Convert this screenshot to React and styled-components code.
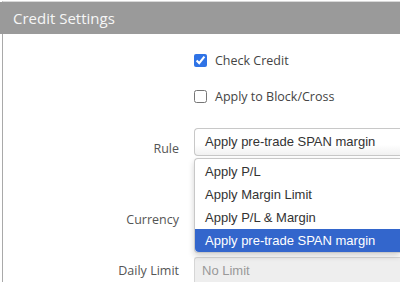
import styled, { createGlobalStyle } from 'styled-components'

const GlobalStyle = createGlobalStyle`
  html, body {
    margin: 0;
    padding: 0;
    background: #fff;
  }
  body {
    font-family: 'Open Sans', 'Liberation Sans', sans-serif;
    overflow: hidden;
  }
`

const Panel = styled.div`
  margin: 1px 0 0 2px;
  height: 281px;
  border-left: 1px solid #a9a9a9;
  border-top: 1px solid #d8d8d8;
  box-sizing: border-box;
`

const Header = styled.div`
  height: 32px;
  background: #9a9a9a;
  color: #f6f6f6;
  font-size: 15px;
  line-height: 32px;
  margin-left: -3px;
  padding-left: 13px;
`

const Body = styled.div`
  display: grid;
  grid-template-columns: 176px 1fr;
  column-gap: 15px;
  padding-top: 16px;
`

const Label = styled.div`
  text-align: right;
  font-size: 12.5px;
  color: #555;
  height: 28px;
  line-height: 28px;
  padding-top: ${p => p.offset || 0}px;
  box-sizing: border-box;
`

const Cell = styled.div`
  position: relative;
  height: ${p => p.h || 28}px;
  margin-bottom: ${p => p.gap || 0}px;
`

const Check = styled.label`
  display: flex;
  align-items: center;
  gap: 8px;
  height: 20px;
  font-size: 12.5px;
  color: #444;

  input {
    margin: 0;
    width: 13px;
    height: 13px;
    accent-color: #2f73e6;
  }
`

const SelectBox = styled.div`
  height: 28px;
  box-sizing: border-box;
  border: 1px solid #c8c8c8;
  border-right: none;
  border-radius: 4px 0 0 4px;
  background: linear-gradient(#fff 0%, #fff 60%, #f1f1f1 100%);
  font-family: 'Liberation Sans', Arial, sans-serif;
  font-size: 13px;
  color: #333;
  line-height: 26px;
  padding-left: 10px;
`

const Menu = styled.ul`
  position: absolute;
  top: 30px;
  left: 0;
  right: 0;
  margin: 0;
  padding: 1px 0 0;
  list-style: none;
  background: #fff;
  border: 1px solid #c8c8c8;
  border-right: none;
  border-radius: 4px 0 0 4px;
  box-shadow: 0 3px 6px rgba(0, 0, 0, 0.18);
  z-index: 2;
  font-family: 'Liberation Sans', Arial, sans-serif;
  font-size: 13px;
`

const Option = styled.li`
  height: 23px;
  line-height: 23px;
  padding-left: 10px;
  color: ${p => (p.$active ? '#fff' : '#333')};
  background: ${p => (p.$active ? '#3366cc' : 'transparent')};
  border-radius: ${p => (p.$active ? '0 0 0 4px' : '0')};
`

const TextInput = styled.div`
  height: 28px;
  box-sizing: border-box;
  border: 1px solid #d6d6d6;
  border-right: none;
  border-radius: 3px 0 0 3px;
  background: #eee;
  font-family: 'Liberation Sans', Arial, sans-serif;
  font-size: 13px;
  color: #999;
  line-height: 26px;
  padding-left: 7px;
`

const options = ['Apply P/L', 'Apply Margin Limit', 'Apply P/L & Margin', 'Apply pre-trade SPAN margin']

export default function App() {
  return (
    <>
      <GlobalStyle />
      <Panel>
        <Header>Credit Settings</Header>
        <Body>
          <div />
          <Cell h={20} gap={16}>
            <Check>
              <input type="checkbox" defaultChecked />
              Check Credit
            </Check>
          </Cell>
          <div />
          <Cell h={20} gap={22}>
            <Check>
              <input type="checkbox" />
              Apply to Block/Cross
            </Check>
          </Cell>
          <Label offset={7}>Rule</Label>
          <Cell gap={50}>
            <SelectBox>Apply pre-trade SPAN margin</SelectBox>
            <Menu>
              {options.map((o, i) => (
                <Option key={o} $active={i === options.length - 1}>{o}</Option>
              ))}
            </Menu>
          </Cell>
          <Label>Currency</Label>
          <Cell gap={23}>
            <SelectBox />
          </Cell>
          <Label>Daily Limit</Label>
          <Cell>
            <TextInput>No Limit</TextInput>
          </Cell>
        </Body>
      </Panel>
    </>
  )
}
